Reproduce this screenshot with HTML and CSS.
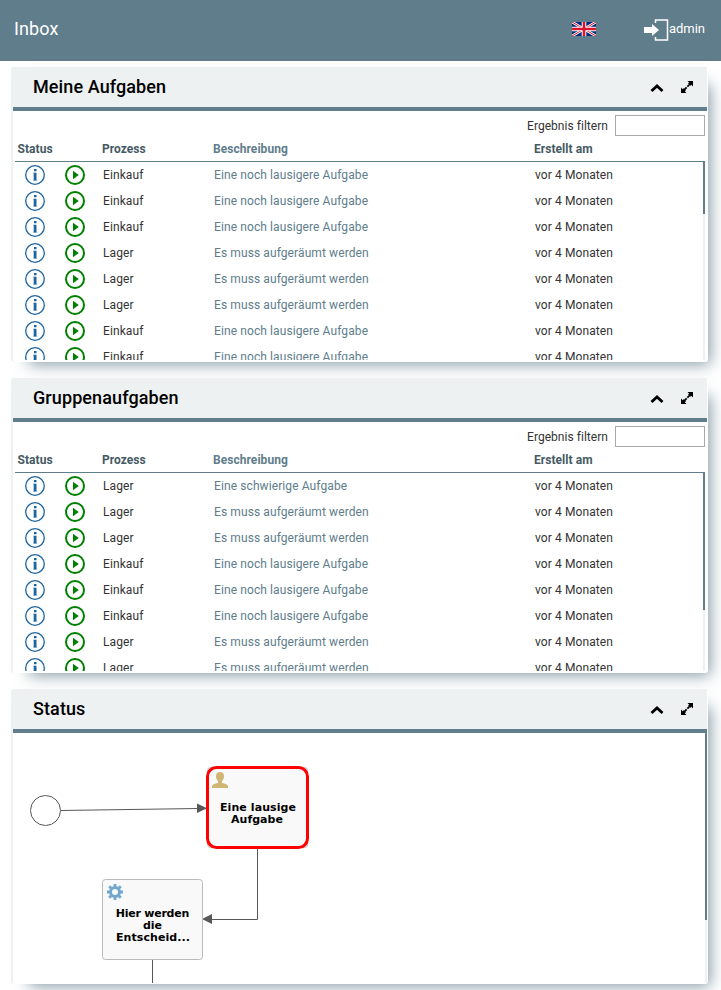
FILE: index.html
```html
<!DOCTYPE html>
<html lang="de">
<head>
<meta charset="utf-8">
<title>Inbox</title>
<link rel="stylesheet" href="styles.css">
</head>
<body>
<svg class="defs" aria-hidden="true">
  <symbol id="info" viewBox="0 0 20 20"><circle cx="10" cy="10" r="9.3" fill="#fff" stroke="#1c659f" stroke-width="1.3"/><path d="M9 4h2.500v2.300H9zM8.700 7.800h2.800v7.700H8.700z" fill="#1c659f"/><path d="M8 7.800h1v.8H8zM8 14.800h4.300v.8H8z" fill="#1c659f" opacity=".5"/></symbol>
  <symbol id="play" viewBox="0 0 20 20"><circle cx="10" cy="10" r="9" fill="#fff" stroke="#008000" stroke-width="2"/><path d="M8 5.800v8.400l5.800-4.200z" fill="#008000"/></symbol>
  <symbol id="up" viewBox="0 0 14 10"><path d="M1.500 8 7 3l5.500 5" fill="none" stroke="#000" stroke-width="2.800"/></symbol>
  <symbol id="expand" viewBox="0 0 12 12"><path d="M6.500 0H12v5.500l-1.700-1.700L9 5.100 6.900 3l1.300-1.300zM5.500 12H0V6.500l1.700 1.700L3 6.900 5.100 9l-1.300 1.300z"/><path d="m4 8 4-4" stroke="#000" stroke-width="1.800" stroke-dasharray="2.300 1"/></symbol>
</svg>
<header class="topbar">
  <h1>Inbox</h1>
  <svg class="flag" viewBox="0 0 24 14" preserveAspectRatio="none"><path fill="#012a7d" d="M0 0h24v14H0z"/><path d="M0 0l24 14M24 0 0 14" stroke="#fff" stroke-width="2.600"/><path d="M0 0l24 14M24 0 0 14" stroke="#d8142f" stroke-width="1"/><path d="M12 0v14M0 7h24" stroke="#fff" stroke-width="4.600"/><path d="M12 0v14M0 7h24" stroke="#d8142f" stroke-width="2.600"/></svg>
  <a class="user"><svg width="25" height="22" viewBox="0 0 25 22"><path d="M11.500 4V1h12v20h-12v-3" fill="none" stroke="#fff" stroke-width="1.500"/><path d="M0 8h8V5l7 6-7 6v-3H0z" fill="#fff"/></svg><span>admin</span></a>
</header>
<main>
  <section class="panel">
    <div class="head"><h2>Meine Aufgaben</h2><svg class="up"><use href="#up"/></svg><svg class="expand"><use href="#expand"/></svg></div>
    <div class="body tasks">
      <label class="filter">Ergebnis filtern <input type="text"></label>
      <div class="row titles"><span>Status</span><span></span><span>Prozess</span><span class="desc">Beschreibung</span><span>Erstellt am</span></div>
      <div class="scroll"><div class="rows">
        <div class="row"><svg><use href="#info"/></svg><svg><use href="#play"/></svg><span>Einkauf</span><span class="desc">Eine noch lausigere Aufgabe</span><span>vor 4 Monaten</span></div>
        <div class="row"><svg><use href="#info"/></svg><svg><use href="#play"/></svg><span>Einkauf</span><span class="desc">Eine noch lausigere Aufgabe</span><span>vor 4 Monaten</span></div>
        <div class="row"><svg><use href="#info"/></svg><svg><use href="#play"/></svg><span>Einkauf</span><span class="desc">Eine noch lausigere Aufgabe</span><span>vor 4 Monaten</span></div>
        <div class="row"><svg><use href="#info"/></svg><svg><use href="#play"/></svg><span>Lager</span><span class="desc">Es muss aufgeräumt werden</span><span>vor 4 Monaten</span></div>
        <div class="row"><svg><use href="#info"/></svg><svg><use href="#play"/></svg><span>Lager</span><span class="desc">Es muss aufgeräumt werden</span><span>vor 4 Monaten</span></div>
        <div class="row"><svg><use href="#info"/></svg><svg><use href="#play"/></svg><span>Lager</span><span class="desc">Es muss aufgeräumt werden</span><span>vor 4 Monaten</span></div>
        <div class="row"><svg><use href="#info"/></svg><svg><use href="#play"/></svg><span>Einkauf</span><span class="desc">Eine noch lausigere Aufgabe</span><span>vor 4 Monaten</span></div>
        <div class="row"><svg><use href="#info"/></svg><svg><use href="#play"/></svg><span>Einkauf</span><span class="desc">Eine noch lausigere Aufgabe</span><span>vor 4 Monaten</span></div>
      </div><div class="track"><div class="thumb short"></div></div></div>
    </div>
  </section>
  <section class="panel">
    <div class="head"><h2>Gruppenaufgaben</h2><svg class="up"><use href="#up"/></svg><svg class="expand"><use href="#expand"/></svg></div>
    <div class="body tasks">
      <label class="filter">Ergebnis filtern <input type="text"></label>
      <div class="row titles"><span>Status</span><span></span><span>Prozess</span><span class="desc">Beschreibung</span><span>Erstellt am</span></div>
      <div class="scroll"><div class="rows">
        <div class="row"><svg><use href="#info"/></svg><svg><use href="#play"/></svg><span>Lager</span><span class="desc">Eine schwierige Aufgabe</span><span>vor 4 Monaten</span></div>
        <div class="row"><svg><use href="#info"/></svg><svg><use href="#play"/></svg><span>Lager</span><span class="desc">Es muss aufgeräumt werden</span><span>vor 4 Monaten</span></div>
        <div class="row"><svg><use href="#info"/></svg><svg><use href="#play"/></svg><span>Lager</span><span class="desc">Es muss aufgeräumt werden</span><span>vor 4 Monaten</span></div>
        <div class="row"><svg><use href="#info"/></svg><svg><use href="#play"/></svg><span>Einkauf</span><span class="desc">Eine noch lausigere Aufgabe</span><span>vor 4 Monaten</span></div>
        <div class="row"><svg><use href="#info"/></svg><svg><use href="#play"/></svg><span>Einkauf</span><span class="desc">Eine noch lausigere Aufgabe</span><span>vor 4 Monaten</span></div>
        <div class="row"><svg><use href="#info"/></svg><svg><use href="#play"/></svg><span>Einkauf</span><span class="desc">Eine noch lausigere Aufgabe</span><span>vor 4 Monaten</span></div>
        <div class="row"><svg><use href="#info"/></svg><svg><use href="#play"/></svg><span>Lager</span><span class="desc">Es muss aufgeräumt werden</span><span>vor 4 Monaten</span></div>
        <div class="row"><svg><use href="#info"/></svg><svg><use href="#play"/></svg><span>Lager</span><span class="desc">Es muss aufgeräumt werden</span><span>vor 4 Monaten</span></div>
      </div><div class="track"><div class="thumb medium"></div></div></div>
    </div>
  </section>
  <section class="panel">
    <div class="head"><h2>Status</h2><svg class="up"><use href="#up"/></svg><svg class="expand"><use href="#expand"/></svg></div>
    <div class="body canvas">
      <svg class="diagram" width="692" height="250" viewBox="13 733 692 250">
        <circle cx="45.500" cy="810.500" r="15" fill="#fff" stroke="#585858"/>
        <path d="M61 810.500 198 808.500M257.500 849v70.500H212M152.500 960v23" fill="none" stroke="#585858"/>
        <path d="M197 803.500v9.500l10-4.800zM212 914v10l-10-5z" fill="#585858"/>
        <rect x="207.500" y="767.500" width="100" height="80" rx="3" fill="#f9f9f9" stroke="#bbb"/>
        <rect x="207.500" y="767.500" width="100" height="80" rx="9" fill="none" stroke="red" stroke-width="3"/>
        <path d="M216 776c0-2.500 1.500-4 4-4s4 1.500 4 4c0 2.500-.8 4-2 5v2c3.500.8 6 1.500 6 3.500v1.500h-16v-1.500c0-2 2.500-2.700 6-3.500v-2c-1.200-1-2-2.500-2-5z" fill="#d1b575"/>
        <rect x="102.500" y="879.500" width="100" height="80" rx="3" fill="#f9f9f9" stroke="#bbb"/>
        <g transform="translate(115 892)" fill="none" stroke="#72a7d0"><circle r="4.500" stroke-width="3"/><path d="M0-5v-3M0 5v3M5 0h3M-5 0h-3M3.800-3.800l2-2M-3.800 3.800l-2 2M3.800 3.800l2 2M-3.800-3.800l-2-2" stroke-width="2.800"/></g>
        <g class="node-text"><text x="258" y="811" textLength="76">Eine lausige</text><text x="257" y="823">Aufgabe</text><text x="152.500" y="917" textLength="73.500">Hier werden</text><text x="152.500" y="929">die</text><text x="153" y="941" textLength="74">Entscheid...</text></g>
      </svg>
      <div class="track"><div class="thumb long"></div></div>
    </div>
  </section>
</main>
</body>
</html>
```

FILE: styles.css
```css
* { box-sizing: border-box; }
html { overflow: hidden; }
body { margin: 0; height: 990px; overflow: hidden; background: #fff; font: 12px/16px Roboto, sans-serif; color: #333; letter-spacing: .1px; }
svg { display: block; flex: none; }
.defs { position: absolute; width: 0; height: 0; }
.topbar { height: 61px; padding: 0 16px 3px 14px; display: flex; align-items: center; background: #607d8b; color: #fff; }
h1 { flex: 1; margin: 0; font-size: 18px; line-height: 22px; font-weight: 400; letter-spacing: .1px; }
.flag { width: 24px; height: 14px; margin-right: 48px; }
.user { display: flex; align-items: center; font-size: 13px; letter-spacing: -.02px; }
.user svg { margin-top: 2px; }
main { padding: 6px 13px 0 11px; display: flex; flex-direction: column; gap: 16px; }
.panel { height: 295px; border-left: 2px solid #edf1f2; border-right: 1px solid #fff; border-radius: 3px; background: #fff; box-shadow: 10px 10px 15px -8px rgba(96, 125, 139, .8); }
.head { height: 44px; padding: 0 14px 0 20px; display: flex; align-items: center; background: #edf1f2; border-bottom: 4px solid #607d8b; }
h2 { flex: 1; margin: 0; color: #000; font-size: 18px; line-height: 24px; font-weight: 500; letter-spacing: .1px; }
.up { width: 14px; height: 10px; margin: 2px 17px 0 0; }
.expand { width: 12px; height: 12px; }
.body { height: 249px; overflow: hidden; }
.tasks { padding: 4px 2px 0; }
.filter { display: flex; justify-content: flex-end; align-items: center; gap: 7px; letter-spacing: .04px; }
input { width: 90px; height: 21px; margin: 0; padding: 0; border: 1px solid #a9a9a9; background: #fff; }
.row { height: 26px; display: grid; grid-template-columns: 40px 48px 111px 321px 1fr; align-items: center; }
.row svg { width: 20px; height: 20px; margin-left: 10px; }
.desc { color: #607d8b; }
.titles { border-bottom: 1px solid #607d8b; color: #455a64; font-weight: 700; letter-spacing: .05px; }
.titles span { margin-left: -1px; }
.titles span:first-child { margin-left: 2.5px; }
.titles .desc { color: #607d8b; }
.scroll { display: flex; height: 198px; overflow: hidden; }
.rows { flex: 1; }
.track { width: 2px; flex: none; background: #edf1f2; }
.thumb { background: #607d8b; }
.short { height: 52px; }
.medium { height: 137px; }
.long { height: 187px; }
.canvas { display: flex; height: 250px; }
.node-text { font: bold 11px "DejaVu Sans", sans-serif; letter-spacing: 0; fill: #000; text-anchor: middle; }
```
